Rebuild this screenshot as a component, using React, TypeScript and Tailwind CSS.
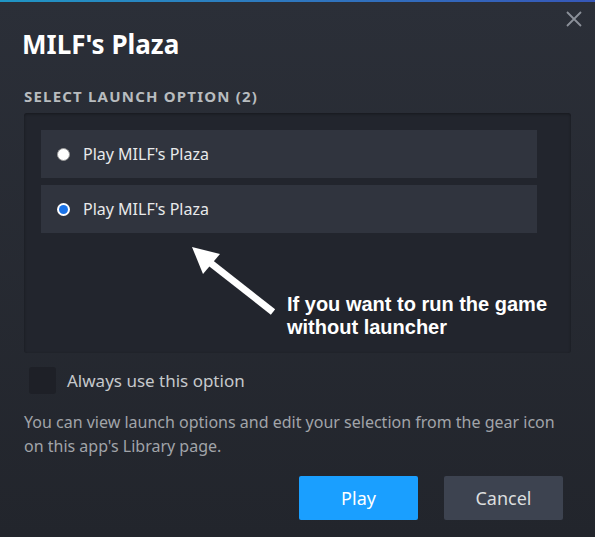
import React from 'react'

const options = ["Play MILF's Plaza", "Play MILF's Plaza"]

const App = () => {
    const selected = 1
    return (
        <div
            className="relative w-[595px] h-[537px] overflow-hidden bg-gradient-to-b from-[#2b2f38] to-[#22252c] text-[#dcdedf]"
            style={{ fontFamily: '"Noto Sans", "Open Sans", sans-serif' }}
        >
            <div className="h-[2px] bg-gradient-to-r from-[#1f95c4] to-[#3657b8]" />

            <button className="absolute top-[10px] right-[12px] text-[#8b9099]">
                <svg width="18" height="18" viewBox="0 0 18 18" stroke="currentColor" strokeWidth="1.8">
                    <path d="M2 2 L16 16 M16 2 L2 16" />
                </svg>
            </button>

            <div className="flex flex-col px-6 pt-[27px]">
                <h1 className="text-[26px] font-bold leading-[30px] text-white -ml-[2px]">
                    MILF's Plaza
                </h1>

                <h2 className="mt-[28px] text-[15px] font-bold tracking-[0.08em] text-[#b8bcbf] leading-[18px]">
                    SELECT LAUNCH OPTION (2)
                </h2>

                <div className="relative mt-[8px] h-[240px] w-[547px] rounded-[3px] bg-[#22252d] shadow-[inset_0_1px_3px_rgba(0,0,0,0.35)] px-[17px] pt-[17px]">
                    <div className="flex flex-col gap-[7px]">
                        {options.map((label, index) => (
                            <div
                                key={index}
                                className="flex items-center h-[48px] w-[496px] bg-[#30343e] pl-[16px]"
                            >
                                {index === selected ? (
                                    <span className="w-[13px] h-[13px] rounded-full bg-white flex items-center justify-center">
                                        <span className="w-[9px] h-[9px] rounded-full bg-[#1a73e8]" />
                                    </span>
                                ) : (
                                    <span className="w-[13px] h-[13px] rounded-full bg-white border border-[#9a9a9a]" />
                                )}
                                <span className="ml-[13px] text-[16px] text-[#e8e9ea]">{label}</span>
                            </div>
                        ))}
                    </div>

                    {/* annotation arrow */}
                    <svg
                        className="absolute left-[160px] top-[128px]"
                        width="100"
                        height="80"
                        viewBox="0 0 100 80"
                    >
                        <path d="M89 71 L24 20" stroke="white" strokeWidth="7" />
                        <path d="M8 6 L36 13 L19 33 Z" fill="white" />
                    </svg>
                    <p
                        className="absolute left-[263px] top-[180px] text-[20px] font-bold leading-[23px] text-white whitespace-nowrap"
                        style={{ fontFamily: '"Liberation Sans", Arial, sans-serif' }}
                    >
                        If you want to run the game
                        <br />
                        without launcher
                    </p>
                </div>

                <label className="flex items-center mt-[14px] ml-[5px]">
                    <span className="w-[27px] h-[27px] rounded-[3px] bg-[#1e2027]" />
                    <span className="ml-[11px] text-[17px] text-[#c6c9cc]">Always use this option</span>
                </label>

                <p className="mt-[16px] text-[16px] leading-[24px] text-[#a1a4a9]">
                    You can view launch options and edit your selection from the gear icon on this app's Library page.
                </p>

                <div className="flex justify-end gap-[26px] mt-[18px] pr-[8px]">
                    <button className="w-[119px] h-[44px] rounded-[2px] bg-[#1a9fff] text-white text-[18px]">
                        Play
                    </button>
                    <button className="w-[119px] h-[44px] rounded-[2px] bg-[#3d4350] text-[#dcdedf] text-[18px]">
                        Cancel
                    </button>
                </div>
            </div>
        </div>
    )
}

export default App
